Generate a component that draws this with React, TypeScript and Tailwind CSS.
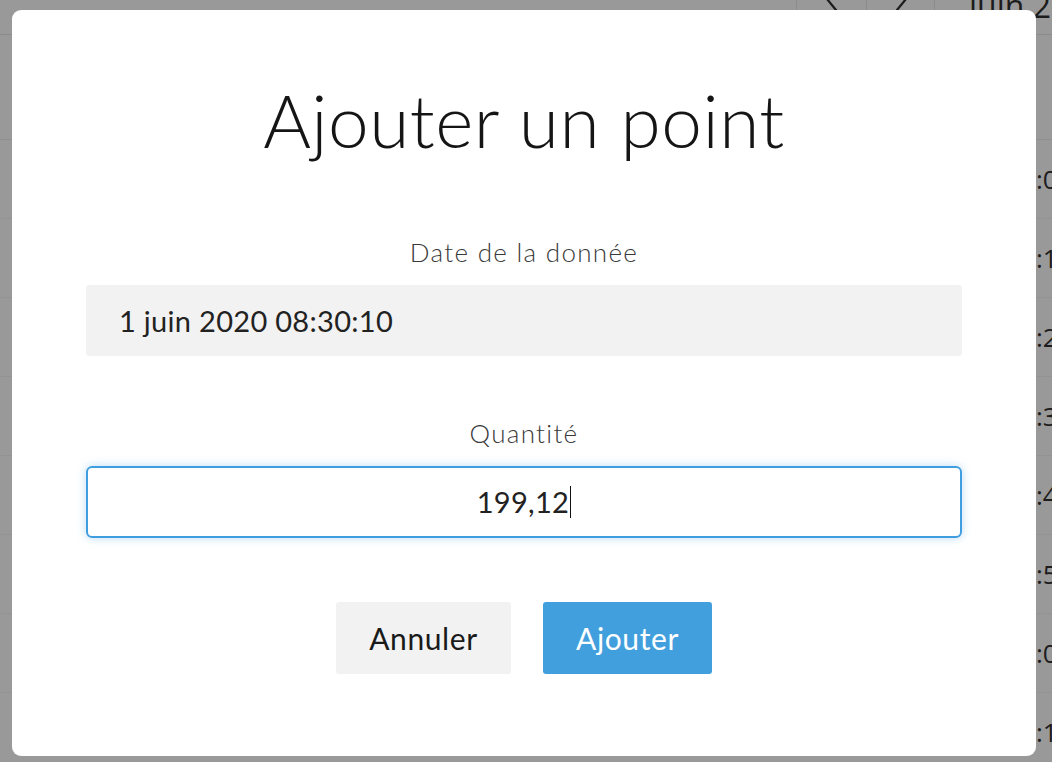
import React from "react";

const rows = [":00", ":10", ":20", ":30", ":40", ":50", ":00", ":10", ":20"];

const Chevron = ({ dir }: { dir: "l" | "r" }) => (
  <svg width="16" height="26" viewBox="0 0 16 26" className="-mt-[14px]">
    <path
      d={dir === "l" ? "M12 2 L3 13 L12 24" : "M4 2 L13 13 L4 24"}
      fill="none"
      stroke="#1c1c1c"
      strokeWidth="2.2"
      strokeLinecap="round"
      strokeLinejoin="round"
    />
  </svg>
);

const Backdrop = () => {
  return (
    <div className="w-full h-screen bg-[#999999] overflow-hidden font-['Open_Sans',sans-serif] text-[#1c1c1c]">
      <div className="h-[35px] border-b border-[#8c8c8c] flex pl-[796px]">
        <div className="w-[70px] shrink-0 border-l border-[#8c8c8c] flex justify-center items-start">
          <Chevron dir="l" />
        </div>
        <div className="w-[69px] shrink-0 border-l border-r border-[#8c8c8c] flex justify-center items-start">
          <Chevron dir="r" />
        </div>
        <div className="shrink-0 pl-[34px] text-[32px] leading-[20px] -mt-[4px] whitespace-nowrap">juin 2020</div>
      </div>
      <div className="h-[105px] border-b border-[#8f8f8f]" />
      {rows.map((r, i) => (
        <div key={i} className="h-[79px] border-b border-[#939393] flex items-center pl-[1036px] text-[26px] whitespace-nowrap">
          {r}
        </div>
      ))}
    </div>
  );
};

export default function App() {
  return (
    <div className="relative w-full h-screen">
      <Backdrop />
      <div className="absolute left-[12px] top-[10px] w-[1024px] h-[746px] bg-white rounded-[9px] flex flex-col items-center font-['Lato',sans-serif]">
        <h1 className="mt-[70px] text-[73px] leading-[80px] font-light text-[#151515] tracking-[0.5px]">Ajouter un point</h1>

        <label className="mt-[77px] text-[26px] leading-[30px] font-light text-[#3a3a3a] tracking-[1.3px]">Date de la donnée</label>
        <div className="mt-[18px] w-[876px] h-[71px] bg-[#f2f2f2] rounded-[3px] flex items-center pl-[33px] text-[29px] text-[#222] tracking-[0.3px]">
          1 juin 2020 08:30:10
        </div>

        <label className="mt-[62px] text-[26px] leading-[30px] font-light text-[#3a3a3a] tracking-[1.3px]">Quantité</label>
        <div className="mt-[18px] w-[876px] h-[72px] border-2 border-[#3f9ee0] rounded-[6px] shadow-[0_0_10px_rgba(63,158,224,0.35)] flex items-center justify-center text-[29px] text-[#222] tracking-[0.3px]">
          <span>199,12</span>
          <span className="w-px h-[32px] bg-[#111] ml-[1px]" />
        </div>

        <div className="mt-[64px] flex gap-[32px]">
          <button className="w-[175px] h-[72px] bg-[#f2f2f2] rounded-[3px] text-[30px] text-[#1a1a1a] tracking-[0.6px]">Annuler</button>
          <button className="w-[169px] h-[72px] bg-[#429fdd] rounded-[3px] text-[30px] text-white tracking-[0.6px]">Ajouter</button>
        </div>
      </div>
    </div>
  );
}
